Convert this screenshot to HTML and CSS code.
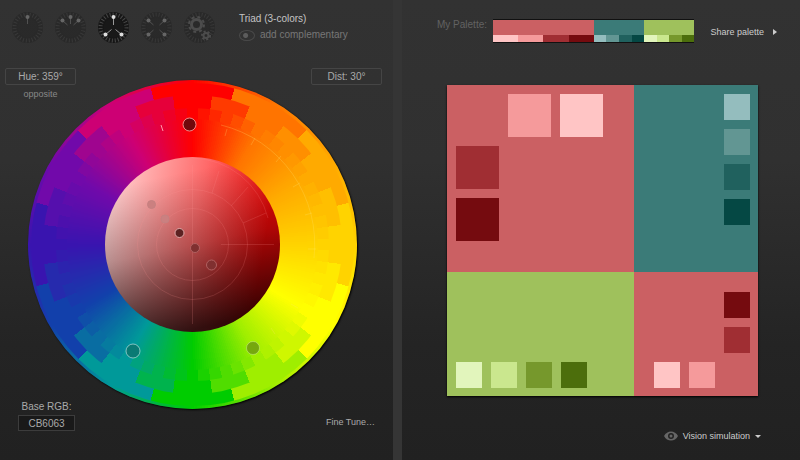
FILE: index.html
```
<!DOCTYPE html>
<html lang="en">
<head>
    <meta charset="UTF-8">
    <meta name="viewport" content="width=device-width, initial-scale=1.0">
    <title>Color Scheme Designer</title>
    <link rel="stylesheet" href="styles.css">
</head>
<body>
    <div class="app">
        <section class="panel picker">
            <header class="picker-header">
                <div class="modes">
                    <button class="mode" aria-label="Mono">
                        <svg viewBox="0 0 33 33">
                            <circle class="disc" cx="16.5" cy="16.5" r="15.5"/>
                            <circle class="ticks" cx="16.5" cy="16.5" r="13"/>
                            <circle class="core" cx="16.5" cy="16.5" r="10"/>
                            <path class="needle" d="M16.5 6V13"/>
                            <circle class="dot" cx="16.5" cy="6" r="2"/>
                        </svg>
                    </button>
                    <button class="mode" aria-label="Analogic">
                        <svg viewBox="0 0 33 33">
                            <circle class="disc" cx="16.5" cy="16.5" r="15.5"/>
                            <circle class="ticks" cx="16.5" cy="16.5" r="13"/>
                            <circle class="core" cx="16.5" cy="16.5" r="10"/>
                            <path class="needle" d="M16.5 6V13M8.5 9.5L13.5 14M24.5 9.5L19.5 14"/>
                            <circle class="dot" cx="16.5" cy="6" r="2"/>
                            <circle class="dot" cx="8.5" cy="9.5" r="2"/>
                            <circle class="dot" cx="24.5" cy="9.5" r="2"/>
                        </svg>
                    </button>
                    <button class="mode active" aria-label="Triad">
                        <svg viewBox="0 0 33 33">
                            <circle class="disc" cx="16.5" cy="16.5" r="15.5"/>
                            <circle class="ticks" cx="16.5" cy="16.5" r="13"/>
                            <circle class="core" cx="16.5" cy="16.5" r="10"/>
                            <path class="needle" d="M16.5 6V14M8.5 23.5L14.5 18.5M24.5 23.5L18.5 18.5"/>
                            <circle class="dot" cx="16.5" cy="6" r="2"/>
                            <circle class="dot" cx="8.5" cy="23.5" r="2"/>
                            <circle class="dot" cx="24.5" cy="23.5" r="2"/>
                        </svg>
                    </button>
                    <button class="mode" aria-label="Tetrad">
                        <svg viewBox="0 0 33 33">
                            <circle class="disc" cx="16.5" cy="16.5" r="15.5"/>
                            <circle class="ticks" cx="16.5" cy="16.5" r="13"/>
                            <circle class="core" cx="16.5" cy="16.5" r="10"/>
                            <path class="needle" d="M8.5 9.5L13.5 14M24.5 9.5L19.5 14M8.5 23.5L13.5 19M24.5 23.5L19.5 19"/>
                            <circle class="dot" cx="8.5" cy="9.5" r="2"/>
                            <circle class="dot" cx="24.5" cy="9.5" r="2"/>
                            <circle class="dot" cx="8.5" cy="23.5" r="2"/>
                            <circle class="dot" cx="24.5" cy="23.5" r="2"/>
                        </svg>
                    </button>
                    <button class="mode" aria-label="Freestyle">
                        <svg viewBox="0 0 33 33">
                            <circle class="disc" cx="16.5" cy="16.5" r="15.5"/>
                            <circle class="ticks" cx="16.5" cy="16.5" r="13"/>
                            <circle class="core" cx="16.5" cy="16.5" r="10"/>
                            <circle class="gear" cx="13.5" cy="13.5" r="5"/>
                            <circle class="teeth" cx="13.5" cy="13.5" r="7.500"/>
                            <circle class="gear small" cx="23" cy="24.5" r="2.500"/>
                            <circle class="teeth small" cx="23" cy="24.5" r="4"/>
                        </svg>
                    </button>
                </div>
                <div class="mode-info">
                    <h1>Triad (3-colors)</h1>
                    <label class="complementary">
                        <input type="checkbox">
                        <span>add complementary</span>
                    </label>
                </div>
            </header>

            <div class="stage">
                <div class="wheel">
                    <div class="ring ring-rim" data-steps="360"></div>
                    <div class="ring ring-1" data-steps="12"></div>
                    <div class="ring ring-2" data-steps="24"></div>
                    <div class="ring ring-3" data-steps="72"></div>
                    <div class="ring ring-4" data-steps="360"></div>
                    <div class="shades"></div>
                    <svg class="overlay" viewBox="0 0 329 329">
                        <g class="scale">
                            <path d="M193 45A123 123 0 0 1 286 178"/>
                            <path d="M199 49L197 56M227 58L223 65M253 76L248 82M272 103L265 107M284 133L277 135M288 169H280M270 228L263 224M247 254L243 248"/>
                        </g>
                        <g class="grid">
                            <circle cx="164.500" cy="164.500" r="36"/>
                            <circle cx="164.500" cy="164.500" r="55"/>
                            <path d="M164.500 85V244M193 164.500H246M164.500 78A80 80 0 0 1 240 138M184 113L191 91M203 126L220 107M215 143L238 133"/>
                        </g>
                        <path class="tick" d="M133 45L135 51"/>
                        <circle class="hue main" cx="161.500" cy="44.500" r="6.500"/>
                        <circle class="hue teal-hue" cx="105" cy="271" r="7"/>
                        <circle class="hue lime-hue" cx="225" cy="268" r="6.500"/>
                        <circle class="shade light" cx="123.500" cy="124.500" r="4"/>
                        <circle class="shade light" cx="137" cy="139" r="4"/>
                        <circle class="shade current" cx="151.500" cy="153" r="4.500"/>
                        <circle class="shade" cx="167" cy="168" r="4.500"/>
                        <circle class="shade" cx="183.500" cy="185" r="5"/>
                    </svg>
                </div>
                <div class="corner top-left">
                    <button class="value-btn">Hue: 359°</button>
                    <button class="text-btn opposite">opposite</button>
                </div>
                <div class="corner top-right">
                    <button class="value-btn">Dist: 30°</button>
                </div>
                <div class="corner bottom-left">
                    <label for="rgb">Base RGB:</label>
                    <input class="rgb" id="rgb" type="text" value="CB6063">
                </div>
                <div class="corner bottom-right">
                    <button class="text-btn">Fine Tune…</button>
                </div>
            </div>
        </section>

        <div class="divider"></div>

        <section class="panel preview">
            <header class="preview-header">
                <span class="palette-label">My Palette:</span>
                <div class="palette">
                    <div class="strip red wide">
                        <i class="red-1"></i><i class="red-2"></i><i class="red-3"></i><i class="red-4"></i>
                    </div>
                    <div class="strip teal">
                        <i class="teal-1"></i><i class="teal-2"></i><i class="teal-3"></i><i class="teal-4"></i>
                    </div>
                    <div class="strip green">
                        <i class="green-1"></i><i class="green-2"></i><i class="green-3"></i><i class="green-4"></i>
                    </div>
                </div>
                <button class="share">
                    Share palette
                    <svg viewBox="0 0 4 6" width="4" height="6"><path d="M0 0L4 3L0 6Z"/></svg>
                </button>
            </header>

            <div class="board">
                <div class="cell red large">
                    <i class="red-2 c2 r1"></i>
                    <i class="red-1 c3 r1"></i>
                    <i class="red-3 c1 r2"></i>
                    <i class="red-4 c1 r3"></i>
                </div>
                <div class="cell teal column">
                    <i class="teal-1"></i>
                    <i class="teal-2"></i>
                    <i class="teal-3"></i>
                    <i class="teal-4"></i>
                </div>
                <div class="cell green row">
                    <i class="green-1"></i>
                    <i class="green-2"></i>
                    <i class="green-3"></i>
                    <i class="green-4"></i>
                </div>
                <div class="cell red small">
                    <i class="red-4 c3 r1"></i>
                    <i class="red-3 c3 r2"></i>
                    <i class="red-1 c1 r3"></i>
                    <i class="red-2 c2 r3"></i>
                </div>
            </div>

            <footer class="preview-footer">
                <button class="vision">
                    <svg class="eye" viewBox="0 0 14 10" width="14" height="10">
                        <path d="M0 5C3 -1 11 -1 14 5C11 11 3 11 0 5Z"/>
                        <circle class="iris" cx="7" cy="5" r="3"/>
                        <circle cx="7" cy="5" r="1.500"/>
                    </svg>
                    Vision simulation
                    <svg class="caret" viewBox="0 0 6 3" width="6" height="3"><path d="M0 0H6L3 3Z"/></svg>
                </button>
            </footer>
        </section>
    </div>

    <script src="script.js"></script>
</body>
</html>
```
FILE: styles.css
```
/* General Styles */
* {
    box-sizing: border-box;
}

body {
    margin: 0;
    font-family: "Liberation Sans", Arial, sans-serif;
    font-size: 10px;
    line-height: 12px;
    color: #aaa;
    background: #222;
}

button {
    margin: 0;
    padding: 0;
    border: none;
    background: none;
    color: inherit;
    font: inherit;
    cursor: pointer;
}

.app {
    display: grid;
    grid-template-columns: 393fr 9px 398fr;
    min-height: 100vh;
}

.panel {
    background: linear-gradient(#323232 0%, #303030 35%, #242424 75%, #212121 100%);
}

.divider {
    background: #353535;
}

/* Picker */
.picker-header {
    display: flex;
    gap: 23px;
    padding: 11px 0 0 11px;
    height: 68px;
}

.modes {
    display: flex;
    gap: 10px;
}

.mode {
    width: 33px;
    height: 33px;
    opacity: 0.3;
}

.mode.active {
    opacity: 1;
}

.mode svg {
    display: block;
}

.disc {
    fill: #161616;
}

.ticks {
    fill: none;
    stroke: #484848;
    stroke-width: 4;
    stroke-dasharray: 1 2;
}

.core {
    fill: #181818;
}

.needle {
    fill: none;
    stroke: #999;
}

.dot {
    fill: #ddd;
}

.gear {
    fill: none;
    stroke: #888;
    stroke-width: 3;
}

.teeth {
    fill: none;
    stroke: #888;
    stroke-width: 2;
    stroke-dasharray: 3 3;
}

.gear.small {
    stroke-width: 2;
}

.teeth.small {
    stroke-dasharray: 2 2;
}

.mode-info {
    padding-top: 2px;
}

.mode-info h1 {
    margin: 0 0 4px;
    font-size: 10px;
    font-weight: normal;
    color: #c4c4c4;
}

.complementary {
    display: flex;
    align-items: center;
    gap: 5px;
    color: #777;
}

.complementary input {
    appearance: none;
    width: 16px;
    height: 11px;
    margin: 0;
    border: 1px solid #4a4a4a;
    border-radius: 50%;
    background: radial-gradient(circle at 40% 50%, #5c5c5c 2px, transparent 3px);
}

.stage {
    display: grid;
}

.stage > * {
    grid-area: 1 / 1;
}

.corner {
    display: flex;
    flex-direction: column;
}

.top-left {
    align-self: start;
    justify-self: start;
    align-items: center;
    gap: 3px;
    margin-left: 5px;
}

.top-right {
    align-self: start;
    justify-self: end;
    margin-right: 11px;
}

.bottom-left {
    align-self: end;
    justify-self: start;
    align-items: center;
    gap: 2px;
    margin-left: 18px;
}

.bottom-right {
    align-self: end;
    justify-self: end;
    margin: 0 18px 3px 0;
}

.value-btn {
    width: 71px;
    height: 17px;
    border: 1px solid #454545;
    border-radius: 2px;
}

.text-btn {
    font-size: 9px;
}

.opposite {
    color: #888;
}

.rgb {
    width: 57px;
    height: 16px;
    padding: 0;
    border: 1px solid #3c3c3c;
    background: #191919;
    color: #aaa;
    font: inherit;
    text-align: center;
}

/* Color wheel */
.wheel {
    display: grid;
    place-items: center;
    align-self: start;
    aspect-ratio: 1;
    margin: 12px 36px 22px 28px;
    border-radius: 50%;
    box-shadow: 1px 1px 2px #000;
}

.wheel > * {
    grid-area: 1 / 1;
    border-radius: 50%;
    aspect-ratio: 1;
}

.ring-rim {
    width: 100%;
}

.ring-1 {
    width: 98%;
}

.ring-2 {
    width: 91%;
}

.ring-3 {
    width: 83%;
}

.ring-4 {
    width: 76%;
}

.shades {
    width: 53%;
    background:
        linear-gradient(168deg, transparent 15%, rgba(0, 0, 0, 0.28) 50%, rgba(0, 0, 0, 0.8) 90%),
        linear-gradient(100deg, #ffdede 0%, #ff6a6a 50%, #f40808 85%);
}

.overlay {
    width: 100%;
}

.scale {
    fill: none;
    stroke: rgba(255, 230, 110, 0.25);
}

.grid {
    fill: none;
    stroke: rgba(255, 150, 150, 0.18);
}

.tick {
    stroke: #f9a;
}

.hue {
    stroke: rgba(255, 255, 255, 0.5);
}

.hue.main {
    fill: #70080c;
    stroke: #e88;
}

.hue.teal-hue {
    fill: #0a7a74;
}

.hue.lime-hue {
    fill: #76a80e;
    stroke: rgba(255, 255, 255, 0.3);
}

.shade {
    fill: #803030;
    stroke: #b06060;
}

.shade.light {
    fill: #cb8080;
    stroke: #c58080;
}

.shade.current {
    fill: #5c2222;
    stroke: #e0a8a8;
}

/* Palette colors */
.red { background: #cb6063; }
.red-1 { background: #ffc5c5; }
.red-2 { background: #f59a9b; }
.red-3 { background: #a02e33; }
.red-4 { background: #750b0f; }

.teal { background: #3b7b78; }
.teal-1 { background: #94bdbe; }
.teal-2 { background: #629693; }
.teal-3 { background: #20615e; }
.teal-4 { background: #054844; }

.green { background: #9fc15c; }
.green-1 { background: #e2f5bc; }
.green-2 { background: #cae78e; }
.green-3 { background: #76982c; }
.green-4 { background: #4c6e0c; }

/* Preview */
.preview-header {
    display: flex;
    align-items: flex-start;
    height: 85px;
    padding: 19px 23px 0 35px;
}

.palette-label {
    width: 56px;
    color: #626262;
    white-space: nowrap;
}

.palette {
    display: flex;
    flex: 1;
    height: 24px;
    border: 1px solid #111;
    border-width: 1px 0;
}

.strip {
    display: flex;
    flex: 1;
    align-items: flex-end;
}

.strip.wide {
    flex: 2;
}

.strip i {
    flex: 1;
    height: 7px;
}

.share {
    display: flex;
    align-items: center;
    gap: 9px;
    margin: 7px 0 0 16px;
    color: #ccc;
    font-size: 9px;
}

.share path,
.caret path {
    fill: #ccc;
}

.board {
    display: grid;
    grid-template-columns: 3fr 2fr;
    grid-template-rows: 3fr 2fr;
    aspect-ratio: 1;
    margin: 0 42px 0 45px;
    box-shadow: 0 1px 2px #000;
}

.cell {
    display: grid;
    gap: 9px;
    padding: 9px 8px 8px 9px;
    grid-auto-columns: 26px;
    grid-auto-rows: 26px;
}

.cell.large {
    grid-template: repeat(3, 43px) / repeat(3, 43px);
}

.cell.column {
    justify-content: end;
}

.cell.row {
    grid-auto-flow: column;
    align-content: end;
}

.cell.small {
    grid-template: repeat(3, 26px) / repeat(3, 26px);
    place-content: end;
}

.c1 { grid-column: 1; }
.c2 { grid-column: 2; }
.c3 { grid-column: 3; }
.r1 { grid-row: 1; }
.r2 { grid-row: 2; }
.r3 { grid-row: 3; }

.preview-footer {
    display: flex;
    justify-content: flex-end;
    padding: 34px 39px 18px 0;
}

.vision {
    display: flex;
    align-items: center;
    gap: 5px;
    color: #ccc;
    font-size: 9px;
}

.eye {
    fill: #666;
}

.eye .iris {
    fill: #222;
}
```
FILE: script.js
```
// The twelve base hues, clockwise from the top
const hues = [
    [255, 0, 0], [255, 116, 0], [255, 170, 0], [255, 211, 0],
    [255, 255, 0], [159, 238, 0], [0, 204, 0], [0, 153, 153],
    [18, 64, 171], [57, 20, 175], [113, 9, 170], [205, 0, 116]
];

function colorAt(angle) {
    const position = angle / 30;
    const index = Math.floor(position) % 12;
    const ratio = position - Math.floor(position);
    const next = hues[(index + 1) % 12];
    const rgb = hues[index].map((c, i) => Math.round(c + (next[i] - c) * ratio));
    return `rgb(${rgb.join(",")})`;
}

// Each ring is cut into equal flat segments centered on their own hue
document.querySelectorAll(".ring").forEach(ring => {
    const steps = Number(ring.dataset.steps);
    const size = 360 / steps;
    const stops = [];
    for (let i = 0; i < steps; i++) {
        stops.push(`${colorAt(i * size)} ${i * size}deg ${(i + 1) * size}deg`);
    }
    ring.style.background = `conic-gradient(from ${-size / 2}deg, ${stops.join(", ")})`;
});
```
